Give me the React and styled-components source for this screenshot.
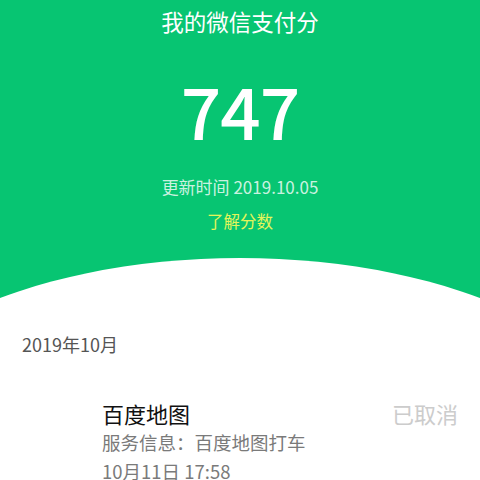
import styled, { createGlobalStyle } from "styled-components";

const GlobalStyle = createGlobalStyle`
  html, body {
    margin: 0;
    padding: 0;
    background: #ffffff;
  }
  body {
    font-family: "Noto Sans CJK SC", "Noto Sans", sans-serif;
  }
`;

const Page = styled.div`
  width: 480px;
  height: 480px;
  overflow: hidden;
  background: #ffffff;
`;

const Header = styled.header`
  position: relative;
  height: 300px;
  overflow: hidden;
  background: #07c572;
  display: flex;
  flex-direction: column;
  align-items: center;
  color: #ffffff;

  &::after {
    content: "";
    position: absolute;
    left: -160px;
    top: 258px;
    width: 800px;
    height: 400px;
    border-radius: 50%;
    background: #ffffff;
  }
`;

const Title = styled.h1`
  margin: 5px 0 0;
  font-size: 22.5px;
  font-weight: 400;
  line-height: 32px;
`;

const Score = styled.div`
  margin-top: 30px;
  font-size: 71px;
  line-height: 84px;
  font-weight: 500;
  letter-spacing: -1px;
`;

const Updated = styled.div`
  margin-top: 24px;
  font-size: 17px;
  line-height: 24px;
  font-weight: 400;
  color: rgba(255, 255, 255, 0.8);
`;

const Learn = styled.div`
  margin-top: 10px;
  font-size: 16.5px;
  line-height: 24px;
  color: #e4f55a;
`;

const Month = styled.div`
  padding: 31px 22px 0;
  font-size: 18px;
  line-height: 26px;
  color: #555555;
`;

const Record = styled.div`
  display: flex;
  justify-content: space-between;
  padding: 41px 22px 0 102px;
`;

const Info = styled.div`
  display: flex;
  flex-direction: column;
`;

const Name = styled.div`
  font-size: 22px;
  line-height: 30px;
  color: #111111;
`;

const Detail = styled.div`
  font-size: 18.5px;
  line-height: 29px;
  color: #7a7a7a;
`;

const Status = styled.div`
  font-size: 22px;
  line-height: 30px;
  color: #cccccc;
`;

export default function App() {
  return (
    <Page>
      <GlobalStyle />
      <Header>
        <Title>我的微信支付分</Title>
        <Score>747</Score>
        <Updated>更新时间 2019.10.05</Updated>
        <Learn>了解分数</Learn>
      </Header>
      <Month>2019年10月</Month>
      <Record>
        <Info>
          <Name>百度地图</Name>
          <Detail>服务信息：百度地图打车</Detail>
          <Detail>10月11日 17:58</Detail>
        </Info>
        <Status>已取消</Status>
      </Record>
    </Page>
  );
}
